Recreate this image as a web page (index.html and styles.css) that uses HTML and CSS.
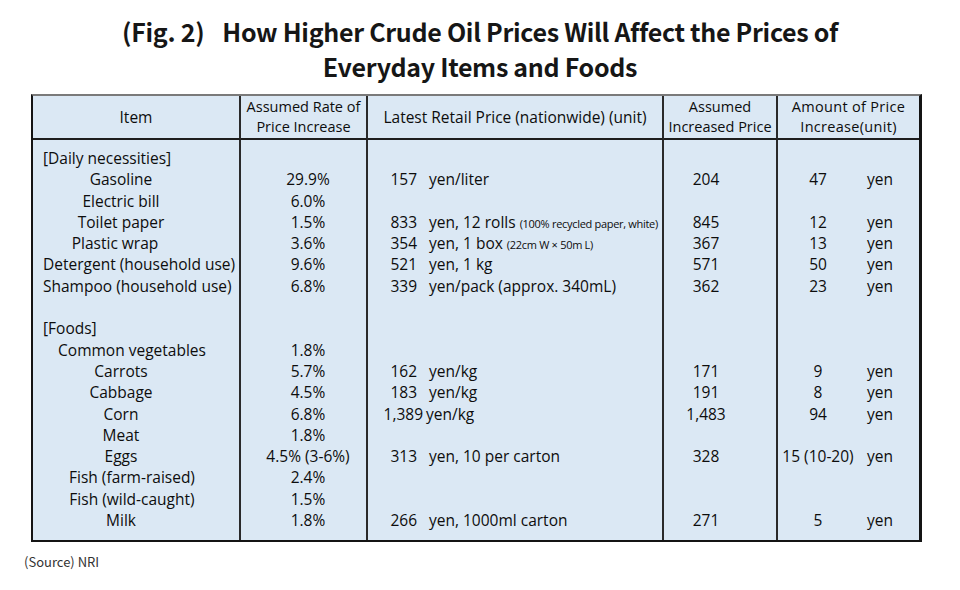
FILE: index.html
```html
<!DOCTYPE html>
<html lang="en">
<head>
<meta charset="utf-8">
<title>How Higher Crude Oil Prices Will Affect the Prices of Everyday Items and Foods</title>
<link rel="stylesheet" href="styles.css">
</head>
<body>
<h1 class="title"><span class="fig">(Fig. 2)</span>How Higher Crude Oil Prices Will Affect the Prices of<br>Everyday Items and Foods</h1>

<table class="tbl">
  <colgroup>
    <col class="c1"><col class="c2"><col class="c3"><col class="c4"><col class="c5">
  </colgroup>
  <thead>
    <tr>
      <th class="one">Item</th>
      <th>Assumed Rate of<br>Price Increase</th>
      <th class="one">Latest Retail Price (nationwide) (unit)</th>
      <th>Assumed<br>Increased Price</th>
      <th class="wide-h">Amount of Price<br>Increase(unit)</th>
    </tr>
  </thead>
  <tbody>
    <tr class="first"><td class="lft">[Daily necessities]</td><td class="rate"></td><td class="price"></td><td class="inc"></td><td class="amt"></td></tr>
    <tr><td class="ctr">Gasoline</td><td class="rate">29.9%</td><td class="price"><span class="num">157</span><span class="unit">yen/liter</span></td><td class="inc">204</td><td class="amt"><span class="val">47</span><span class="yen">yen</span></td></tr>
    <tr><td class="ctr">Electric bill</td><td class="rate">6.0%</td><td class="price"></td><td class="inc"></td><td class="amt"></td></tr>
    <tr><td class="ctr">Toilet paper</td><td class="rate">1.5%</td><td class="price"><span class="num">833</span><span class="unit">yen, 12 rolls <small class="note">(100% recycled paper, white)</small></span></td><td class="inc">845</td><td class="amt"><span class="val">12</span><span class="yen">yen</span></td></tr>
    <tr><td class="ctr ctr-l">Plastic wrap</td><td class="rate">3.6%</td><td class="price"><span class="num">354</span><span class="unit">yen, 1 box <small class="note">(22cm W × 50m L)</small></span></td><td class="inc">367</td><td class="amt"><span class="val">13</span><span class="yen">yen</span></td></tr>
    <tr><td class="lft">Detergent (household use)</td><td class="rate">9.6%</td><td class="price"><span class="num">521</span><span class="unit">yen, 1 kg</span></td><td class="inc">571</td><td class="amt"><span class="val">50</span><span class="yen">yen</span></td></tr>
    <tr><td class="lft">Shampoo (household use)</td><td class="rate">6.8%</td><td class="price"><span class="num">339</span><span class="unit">yen/pack (approx. 340mL)</span></td><td class="inc">362</td><td class="amt"><span class="val">23</span><span class="yen">yen</span></td></tr>
    <tr><td></td><td class="rate"></td><td class="price"></td><td class="inc"></td><td class="amt"></td></tr>
    <tr><td class="lft">[Foods]</td><td class="rate"></td><td class="price"></td><td class="inc"></td><td class="amt"></td></tr>
    <tr><td class="ctr2">Common vegetables</td><td class="rate">1.8%</td><td class="price"></td><td class="inc"></td><td class="amt"></td></tr>
    <tr><td class="ctr">Carrots</td><td class="rate">5.7%</td><td class="price"><span class="num">162</span><span class="unit">yen/kg</span></td><td class="inc">171</td><td class="amt"><span class="val">9</span><span class="yen">yen</span></td></tr>
    <tr><td class="ctr">Cabbage</td><td class="rate">4.5%</td><td class="price"><span class="num">183</span><span class="unit">yen/kg</span></td><td class="inc">191</td><td class="amt"><span class="val">8</span><span class="yen">yen</span></td></tr>
    <tr><td class="ctr">Corn</td><td class="rate">6.8%</td><td class="price wide"><span class="num">1,389</span><span class="unit">yen/kg</span></td><td class="inc">1,483</td><td class="amt"><span class="val">94</span><span class="yen">yen</span></td></tr>
    <tr><td class="ctr">Meat</td><td class="rate">1.8%</td><td class="price"></td><td class="inc"></td><td class="amt"></td></tr>
    <tr><td class="ctr">Eggs</td><td class="rate">4.5% (3-6%)</td><td class="price"><span class="num">313</span><span class="unit">yen, 10 per carton</span></td><td class="inc">328</td><td class="amt"><span class="val">15 (10-20)</span><span class="yen">yen</span></td></tr>
    <tr><td class="ctr2">Fish (farm-raised)</td><td class="rate">2.4%</td><td class="price"></td><td class="inc"></td><td class="amt"></td></tr>
    <tr><td class="ctr2">Fish (wild-caught)</td><td class="rate">1.5%</td><td class="price"></td><td class="inc"></td><td class="amt"></td></tr>
    <tr class="last"><td class="ctr">Milk</td><td class="rate">1.8%</td><td class="price"><span class="num">266</span><span class="unit">yen, 1000ml carton</span></td><td class="inc">271</td><td class="amt"><span class="val">5</span><span class="yen">yen</span></td></tr>
  </tbody>
</table>

<p class="source">(Source) NRI</p>
</body>
</html>
```

FILE: styles.css
```css
* { box-sizing: border-box; }

html, body {
  margin: 0;
  padding: 0;
  background: #ffffff;
}

body {
  width: 960px;
  height: 590px;
  overflow: hidden;
  color: #111111;
}

.title {
  margin: 0;
  padding-top: 14px;
  font-family: "Noto Sans CJK JP", "Noto Sans", sans-serif;
  font-weight: 700;
  font-size: 25px;
  line-height: 35px;
  text-align: center;
  color: #161616;
  letter-spacing: -0.3px;
}

.fig {
  margin-right: 18px;
}

.tbl {
  margin: 10px 0 0 31px;
  width: 891px;
  table-layout: fixed;
  border-collapse: separate;
  border-spacing: 0;
  background: #dbe8f4;
  border-top: 2px solid #7a7a7a;
  border-left: 2px solid #141414;
  border-right: 3px solid #141414;
  border-bottom: 2px solid #141414;
  font-family: "Open Sans", "Noto Sans", sans-serif;
  font-size: 15.5px;
  color: #0d0d0d;
}

.c1 { width: 208px; }
.c2 { width: 127px; }
.c3 { width: 296px; }
.c4 { width: 114px; }
.c5 { width: 141px; }

.tbl th {
  height: 44px;
  padding: 0;
  font-weight: 400;
  font-size: 14.5px;
  line-height: 20px;
  text-align: center;
  vertical-align: middle;
  border-bottom: 2px solid #1e1e1e;
  border-right: 2px solid #2a2a2a;
  white-space: nowrap;
}

.tbl th.one { font-size: 15.5px; }
.tbl th.wide-h { letter-spacing: 0.3px; }

.tbl th:last-child { border-right: 0; }

.tbl td {
  padding: 0;
  height: 21.3px;
  line-height: 21.3px;
  white-space: nowrap;
  vertical-align: top;
  border-right: 2px solid #2a2a2a;
}

.tbl td:last-child { border-right: 0; }

.tbl tr.first td { padding-top: 8px; height: 29.3px; }
.tbl tr.last td { padding-bottom: 9px; height: 30.3px; }

/* item column */
.lft { padding-left: 10px !important; text-align: left; }
.ctr { text-align: center; padding-right: 30px !important; }
.ctr-l { padding-right: 42px !important; }
.ctr2 { text-align: center; padding-right: 8px !important; }

/* rate column */
.rate { text-align: center; padding-left: 9px !important; }

/* price column */
.price .num {
  display: inline-block;
  vertical-align: top;
  width: 49px;
  text-align: right;
}
.price .unit { margin-left: 12px; }
.price.wide .num { width: 55px; }
.price.wide .unit { margin-left: 3px; }

.note {
  font-size: 11px;
  line-height: 1;
  letter-spacing: -0.3px;
}

/* increased price column */
.inc { text-align: center; padding-right: 28px !important; }

/* amount column */
.amt .val {
  display: inline-block;
  vertical-align: top;
  width: 80px;
  text-align: center;
}
.amt .yen { margin-left: 9px; }

.source {
  margin: 11px 0 0 24px;
  font-family: "Noto Sans CJK JP", "Noto Sans", sans-serif;
  font-size: 13px;
  line-height: 18px;
  color: #333333;
}
```
